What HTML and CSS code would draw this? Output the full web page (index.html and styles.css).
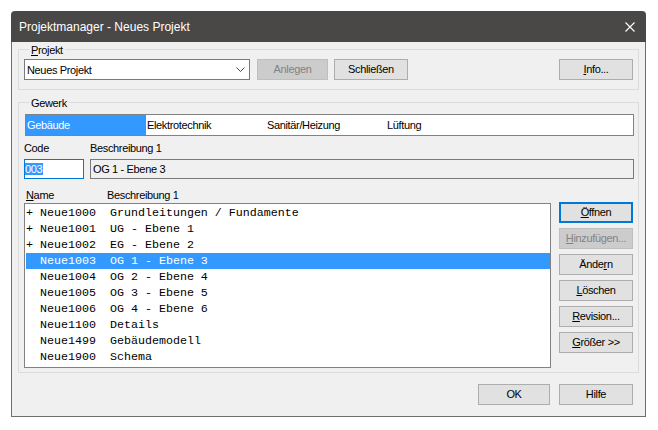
FILE: index.html
```html
<!DOCTYPE html>
<html lang="de">
<head>
<meta charset="utf-8">
<title>Projektmanager - Neues Projekt</title>
<link rel="stylesheet" href="styles.css">
</head>
<body>
<div class="window">
  <div class="titlebar">
    <span class="title">Projektmanager - Neues Projekt</span>
    <svg class="close" width="10" height="10" viewBox="0 0 10 10"><path d="M0.5 0.5 L9.5 9.5 M9.5 0.5 L0.5 9.5" stroke="#fff" stroke-width="1.1" fill="none"/></svg>
  </div>
  <div class="client">
    <div class="group projekt">
      <div class="legend"><u>P</u>rojekt</div>
      <div class="row">
        <div class="combo">
          <span>Neues Projekt</span>
          <svg class="chev" width="9" height="5" viewBox="0 0 9 5"><path d="M0.5 0.5 L4.5 4.5 L8.5 0.5" stroke="#444" stroke-width="1" fill="none"/></svg>
        </div>
        <div class="btn disabled anlegen">Anlegen</div>
        <div class="btn schliessen">Schließen</div>
        <div class="btn info"><u>I</u>nfo...</div>
      </div>
    </div>

    <div class="group gewerk">
      <div class="legend">Gewerk</div>
      <div class="tabs">
        <div class="tab sel">Gebäude</div>
        <div class="tab">Elektrotechnik</div>
        <div class="tab">Sanitär/Heizung</div>
        <div class="tab">Lüftung</div>
      </div>
      <div class="labels">
        <span class="lcode">Code</span>
        <span>Beschreibung 1</span>
      </div>
      <div class="fields">
        <div class="input code"><span class="hl">003</span></div>
        <div class="input desc">OG 1 - Ebene 3</div>
      </div>
      <div class="listhead">
        <span class="hname"><u>N</u>ame</span>
        <span>Beschreibung 1</span>
      </div>
      <div class="listarea">
        <div class="list">
          <div class="item">+ Neue1000  Grundleitungen / Fundamente</div>
          <div class="item">+ Neue1001  UG - Ebene 1</div>
          <div class="item">+ Neue1002  EG - Ebene 2</div>
          <div class="item sel">  Neue1003  OG 1 - Ebene 3</div>
          <div class="item">  Neue1004  OG 2 - Ebene 4</div>
          <div class="item">  Neue1005  OG 3 - Ebene 5</div>
          <div class="item">  Neue1006  OG 4 - Ebene 6</div>
          <div class="item">  Neue1100  Details</div>
          <div class="item">  Neue1499  Gebäudemodell</div>
          <div class="item">  Neue1900  Schema</div>
        </div>
        <div class="sidebtns">
          <div class="btn default"><u>Ö</u>ffnen</div>
          <div class="btn disabled"><u>H</u>inzufügen...</div>
          <div class="btn">Ände<u>r</u>n</div>
          <div class="btn"><u>L</u>öschen</div>
          <div class="btn"><u>R</u>evision...</div>
          <div class="btn"><u>G</u>rößer &gt;&gt;</div>
        </div>
      </div>
    </div>

    <div class="footer">
      <div class="btn ok">OK</div>
      <div class="btn hilfe">Hilfe</div>
    </div>
  </div>
</div>
</body>
</html>
```
FILE: styles.css
```css
* { box-sizing: border-box; }
html, body { margin: 0; padding: 0; background: #ffffff; }
body {
  font-family: "Liberation Sans", Arial, sans-serif;
  font-size: 11px;
  letter-spacing: -0.35px;
  color: #000;
}
u { text-decoration: underline; text-underline-offset: 1px; }

.window {
  margin: 11px 0 0 11px;
  width: 635px;
  border-radius: 4px 4px 0 0;
  overflow: hidden;
}
.titlebar {
  height: 31px;
  background: #4a4846;
  color: #fff;
  display: flex;
  align-items: center;
  padding-left: 8px;
  font-size: 12px;
  letter-spacing: 0;
}
.close { margin-left: auto; margin-right: 11px; }

.client {
  background: #f0f0f0;
  border: 1px solid #6e6e6e;
  border-top: none;
  padding: 7px 6px 11px;
}

.group {
  border: 1px solid #dcdcdc;
  display: flex;
  flex-direction: column;
}
.legend {
  align-self: flex-start;
  margin: -7px 0 0 5px;
  padding: 0 2px;
  height: 14px;
  line-height: 14px;
  background: #f0f0f0;
}

.projekt { padding: 0 5px 9px 5px; }
.row {
  display: flex;
  margin-top: 2px;
  height: 21px;
}
.combo {
  width: 226px;
  height: 21px;
  background: #fff;
  border: 1px solid #7a7a7a;
  display: flex;
  align-items: center;
  padding-left: 2px;
}
.chev { margin-left: auto; margin-right: 4px; }

.btn {
  height: 21px;
  background: #e1e1e1;
  border: 1px solid #adadad;
  display: flex;
  align-items: center;
  justify-content: center;
  line-height: 19px;
}
.btn.disabled {
  background: #cccccc;
  border-color: #bfbfbf;
  color: #838383;
}
.btn.default { border: 2px solid #0078d7; }
.anlegen { width: 71px; margin-left: 7px; }
.schliessen { width: 74px; margin-left: 6px; }
.info { width: 74px; margin-left: auto; }

.gewerk {
  margin-top: 12px;
  padding: 0 5px 4px 5px;
}
.tabs {
  display: flex;
  margin: 4px -1px 0 1px;
  height: 22px;
  background: #fff;
  border: 1px solid #828282;
}
.tab {
  width: 120px;
  height: 20px;
  line-height: 20px;
  padding-left: 1px;
}
.tab.sel { background: #3399ff; color: #fff; }

.labels {
  display: flex;
  margin-top: 5px;
  height: 14px;
  line-height: 14px;
}
.lcode { width: 66px; }

.fields {
  display: flex;
  margin: 4px -1px 0 0;
  height: 20px;
}
.input {
  height: 20px;
  line-height: 18px;
  border: 1px solid #7a7a7a;
}
.input.code {
  width: 60px;
  background: #fff;
  border-color: #0078d7;
  padding-top: 2px;
  line-height: 14px;
}
.hl { display: inline-block; background: #3399ff; color: #fff; height: 12px; line-height: 12px; padding-right: 1px; }
.input.desc {
  flex: 1;
  margin-left: 6px;
  padding-left: 2px;
  background: #f0f0f0;
}

.listhead {
  display: flex;
  margin-top: 9px;
  height: 14px;
  line-height: 14px;
  padding-left: 2px;
}
.hname { width: 81px; }

.listarea { display: flex; align-items: flex-start; }
.list {
  width: 527px;
  height: 165px;
  margin-top: 1px;
  background: #fff;
  border: 1px solid #828282;
  padding: 1px 0 0 1px;
  font-family: "Liberation Mono", "Courier New", monospace;
  font-size: 11.67px;
  letter-spacing: 0;
}
.item {
  height: 16px;
  line-height: 16px;
  white-space: pre;
}
.item.sel { background: #3399ff; color: #fff; }

.sidebtns {
  margin-left: 8px;
  display: flex;
  flex-direction: column;
  gap: 5px;
}
.sidebtns .btn { width: 74px; }

.footer {
  display: flex;
  justify-content: flex-end;
  margin: 11px 6px 0 0;
}
.ok { width: 72px; }
.hilfe { width: 74px; margin-left: 9px; }
```
